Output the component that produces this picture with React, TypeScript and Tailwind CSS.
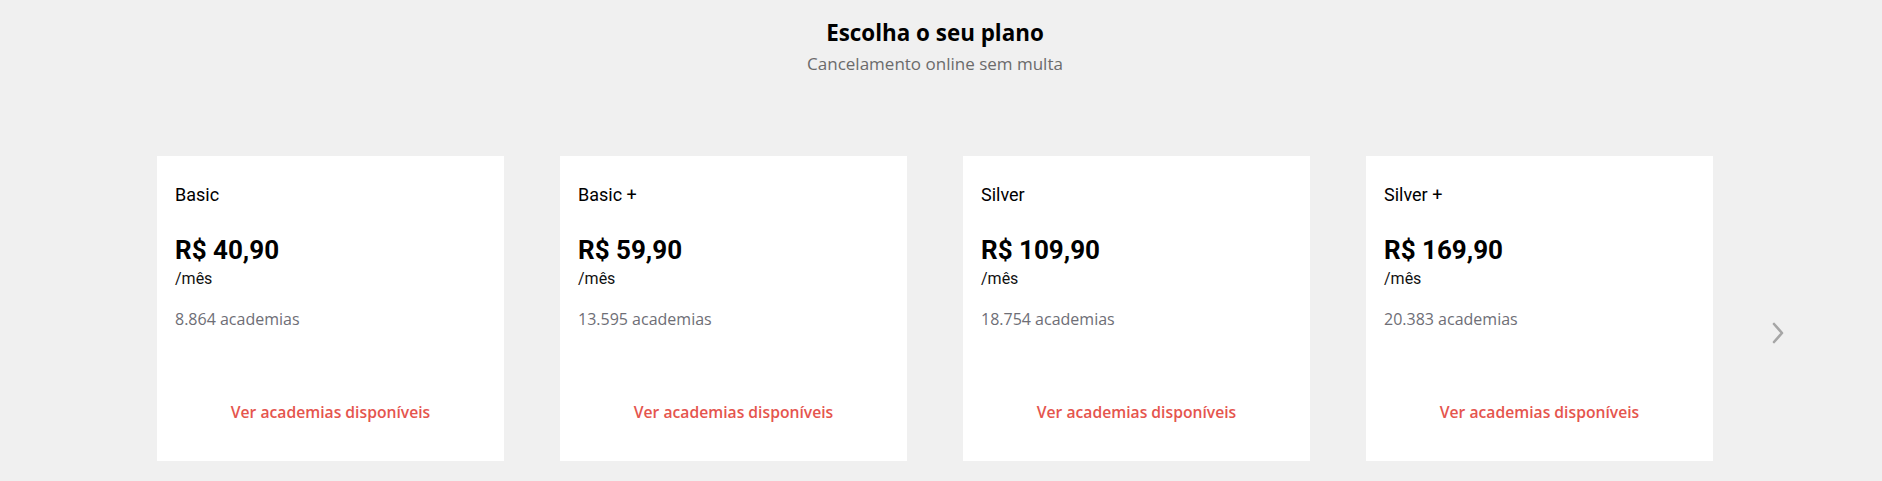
import * as React from "react";

type Plan = { name: string; price: string; gyms: string };

const plans: Plan[] = [
  { name: "Basic", price: "R$ 40,90", gyms: "8.864 academias" },
  { name: "Basic +", price: "R$ 59,90", gyms: "13.595 academias" },
  { name: "Silver", price: "R$ 109,90", gyms: "18.754 academias" },
  { name: "Silver +", price: "R$ 169,90", gyms: "20.383 academias" },
];

const PlanCard = ({ plan }: { plan: Plan }) => (
  <div className="flex h-[305px] w-[347px] flex-col bg-white pt-[28px] pb-[39px]">
    <div className="px-[18px]">
      <p className="font-['Roboto',sans-serif] text-[18px] leading-[22px] text-black">
        {plan.name}
      </p>
      <p className="mt-[29px] font-['Roboto',sans-serif] text-[26px] font-bold leading-[30px] text-black">
        {plan.price}
      </p>
      <p className="mt-[4px] font-['Roboto',sans-serif] text-[16px] leading-[20px] text-[#111]">
        /mês
      </p>
      <p className="mt-[20px] font-['Open_Sans',sans-serif] text-[16px] leading-[20px] text-[#6e6e76]">
        {plan.gyms}
      </p>
    </div>
    <a className="mt-auto block text-center font-['Open_Sans',sans-serif] text-[15.7px] font-semibold leading-[20px] text-[#e5554e]">
      Ver academias disponíveis
    </a>
  </div>
);

export default function App() {
  return (
    <div className="min-h-[481px] w-full bg-[#f0f0f0] pr-[12px]">
      <div className="flex flex-col items-center pt-[18px]">
        <h2 className="font-['Open_Sans',sans-serif] text-[22.4px] font-bold leading-[30px] text-black">
          Escolha o seu plano
        </h2>
        <p className="mt-[4px] font-['Open_Sans',sans-serif] text-[17px] leading-[24px] text-[#6b6b6b]">
          Cancelamento online sem multa
        </p>
      </div>
      <div className="mt-[80px] flex justify-center">
        <div className="relative flex gap-[56px]">
          {plans.map((p) => (
            <PlanCard key={p.name} plan={p} />
          ))}
          <button
            aria-label="Próximo"
            className="absolute top-[166px] left-[calc(100%+59px)]"
          >
            <svg width="12" height="22" viewBox="0 0 12 22" fill="none">
              <path
                d="M2 2 L10 11 L2 20"
                stroke="#a6a6a6"
                strokeWidth="2.6"
                strokeLinecap="round"
                strokeLinejoin="round"
              />
            </svg>
          </button>
        </div>
      </div>
    </div>
  );
}
